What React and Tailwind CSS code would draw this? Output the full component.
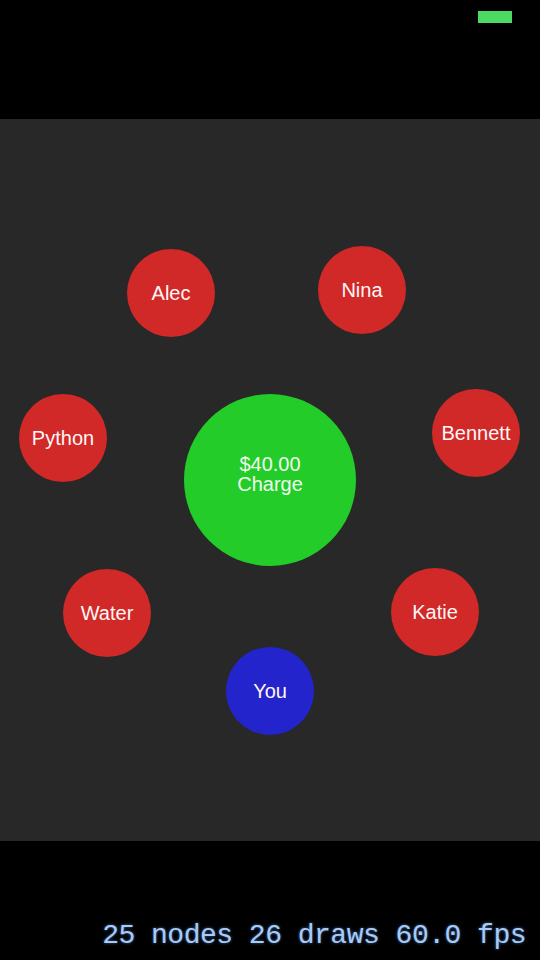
import React from "react";

const people = [
  { name: "Alec", pos: "left-[127px] top-[130px]", color: "bg-[#d12828]" },
  { name: "Nina", pos: "left-[318px] top-[127px]", color: "bg-[#d12828]" },
  { name: "Python", pos: "left-[19px] top-[275px]", color: "bg-[#d12828]" },
  { name: "Bennett", pos: "left-[432px] top-[270px]", color: "bg-[#d12828]" },
  { name: "Water", pos: "left-[63px] top-[450px]", color: "bg-[#d12828]" },
  { name: "Katie", pos: "left-[391px] top-[449px]", color: "bg-[#d12828]" },
  { name: "You", pos: "left-[226px] top-[528px]", color: "bg-[#2424cc]" },
];

const App = () => {
  return (
    <div className="flex h-[960px] w-[540px] flex-col bg-black font-['Liberation_Sans',Arial,sans-serif]">
      <div className="flex h-[119px] justify-end pr-[28px] pt-[11px]">
        <div className="h-[12px] w-[34px] bg-[#4cd964]" />
      </div>

      <div className="relative h-[722px] bg-[#282828]">
        <div className="absolute left-[184px] top-[275px] flex h-[172px] w-[172px] flex-col items-center justify-center rounded-full bg-[#23cc28] pb-[12px] text-[20px] leading-[20px] text-[#eeffee]">
          <span>$40.00</span>
          <span>Charge</span>
        </div>
        {people.map((p) => (
          <div
            key={p.name}
            className={`absolute ${p.pos} ${p.color} flex h-[88px] w-[88px] items-center justify-center rounded-full text-[20px] text-[#fff6f6]`}
          >
            {p.name}
          </div>
        ))}
      </div>

      <div className="flex h-[119px] items-end justify-end pb-[8px] pr-[14px]">
        <p className="font-['Liberation_Mono','Courier_New',monospace] text-[28px] leading-[32px] tracking-[-0.5px] text-[#aacaf4] [text-shadow:0_0_3px_#3b6fb0]">
          25 nodes 26 draws 60.0 fps
        </p>
      </div>
    </div>
  );
};

export default App;
